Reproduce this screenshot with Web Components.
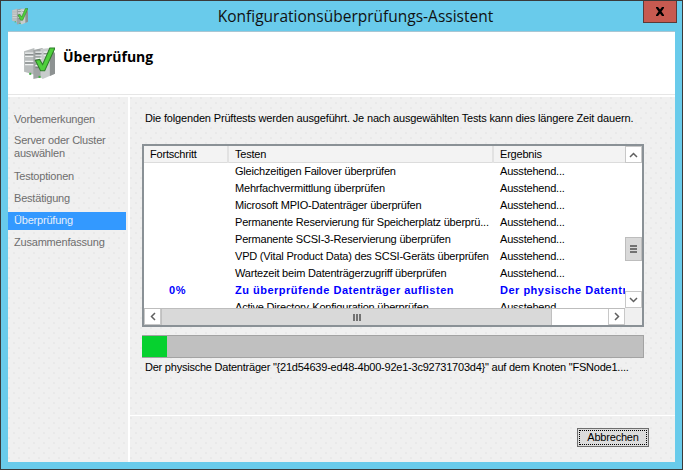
<!DOCTYPE html>
<html lang="de">
<head>
<meta charset="utf-8">
<title>Konfigurationsüberprüfungs-Assistent</title>
<style>
  html, body { margin: 0; padding: 0; background: #69cbeb; }
  body { font: 11px/13px "Liberation Sans", Arial, sans-serif; color: #000; letter-spacing: -.2px; }
</style>
</head>
<body>

<template id="server-icon">
  <style>:host { display: block; } svg { display: block; width: 100%; height: 100%; }</style>
  <svg viewBox="0 0 32 32">
    <path d="M2 4 L12 1 L12 27 L2 24 Z" fill="#b9bdbd"/>
    <path d="M11 3 L20 1 L20 29 L11 31 Z" fill="#9fa4a4"/>
    <path d="M18 2 L27 1 L32 6 L32 26 L20 31 L18 29 Z" fill="#c8cccc"/>
    <path d="M27 1 L32 6 L32 26 L27 28 Z" fill="#8d9292"/>
    <path d="M3 6 H11 M3 9 H11 M3 14 H11 M3 17 H11 M13 5 H19 M13 8 H19 M13 11 H19 M13 18 H19 M21 5 H26 M21 8 H26" stroke="#f0f2f2" stroke-width="1.2"/>
    <path d="M3 7.5 H11 M3 15.5 H11 M13 6.5 H19 M13 20 H19 M21 6.5 H26" stroke="#6f7474" stroke-width=".8"/>
    <rect x="7" y="25" width="2" height="2" fill="#40b040"/>
    <rect x="16" y="28" width="2" height="2" fill="#40b040"/>
    <path d="M13 13 L17 12 L20 17 L27 1 L32 1 L22 23 L18 23 Z" fill="#4fd03c" stroke="#2f7d2a" stroke-width="1"/>
  </svg>
</template>

<template id="title-bar">
  <style>
    :host { display: flex; align-items: flex-start; height: 30px; position: relative; }
    .icon { width: 17px; height: 17px; margin: 7px 0 0 10px; flex: none; }
    .title { flex: 1; text-align: center; margin: 5px 0 0 42px; padding-right: 2px;
      font: 15.5px/20px "Open Sans", "Noto Sans", sans-serif; letter-spacing: 0; color: #111; }
    .close { flex: none; box-sizing: border-box; width: 34px; height: 22px; margin-right: 5px;
      background: #c75a50; border: 1px solid #5b3a38; border-top: none;
      display: flex; align-items: center; justify-content: center; }
  </style>
  <server-icon class="icon"></server-icon>
  <div class="title"><slot></slot></div>
  <div class="close">
    <svg width="10" height="9" viewBox="0 0 10 9"><path d="M1 0 H3 L5 2.5 L7 0 H9 V1 L6.5 4.5 L9 8 V9 H7 L5 6.5 L3 9 H1 V8 L3.5 4.5 L1 1 Z" fill="#000"/></svg>
  </div>
</template>

<template id="wizard-header">
  <style>
    :host { display: flex; align-items: center; height: 63px; background: #fff;
      border-top: 1px solid #a9c6d3; box-sizing: border-box; }
    .icon { width: 33px; height: 33px; margin: 0 8px 0 14px; }
    h1 { margin: -13px 0 0; font: bold 14px/18px "Open Sans", "Noto Sans", sans-serif; letter-spacing: 0; }
  </style>
  <server-icon class="icon"></server-icon>
  <h1><slot></slot></h1>
</template>

<template id="nav-list">
  <style>
    :host { display: flex; flex-direction: column; box-sizing: border-box; width: 120px; padding: 14px 2px 0 0; flex: none; }
  </style>
  <slot></slot>
</template>

<template id="nav-item">
  <style>
    :host { display: block; padding: 2px 0 3px 6px; margin-bottom: var(--gap, 4px); color: #6e6e6e;
      font-size: 11px; line-height: 13px; }
    :host([selected]) { background: #3399ff; color: #e6effa; }
  </style>
  <slot></slot>
</template>

<template id="result-list">
  <style>
    :host { display: grid; grid-template-columns: 1fr 17px; grid-template-rows: 17px 1fr 17px;
      box-sizing: border-box; width: 502px; height: 183px; border: 2px solid #8a9196; background: #fff; overflow: hidden; }
    .head { display: grid; grid-template-columns: 85px 265px 1fr; background: #f3f3f3; border-bottom: 1px solid #dcdcdc; }
    .head div { padding: 2px 6px; border-right: 2px solid #e2e2e2; white-space: nowrap; }
    .head div:last-child { border-right: none; }
    .up, .down { background: #fff; border: 1px solid #c8c8c8; box-sizing: border-box;
      display: flex; align-items: center; justify-content: center; }
    .vbar { grid-column: 2; grid-row: 2; display: flex; flex-direction: column; background: #fff; padding-top: 74px; }
    .vthumb { height: 24px; background: #d9d9d9; border: 1px solid #bdbdbd; box-sizing: border-box;
      display: flex; align-items: center; justify-content: center; }
    .rows { grid-column: 1; grid-row: 2; overflow: hidden; min-height: 0; }
    .hbar { grid-column: 1; grid-row: 3; display: flex; border-top: 1px solid #bdbdbd; box-sizing: border-box; }
    .hthumb { width: 391px; background: #d9d9d9; border-left: 1px solid #c0c0c0; border-right: 1px solid #c0c0c0; box-sizing: border-box;
      display: flex; align-items: center; justify-content: center; }
    .left, .right { width: 17px; flex: none; box-sizing: border-box; background: #fff; border: 1px solid #c8c8c8; border-top: none; display: flex; align-items: center; justify-content: center; }
    .fill { flex: 1; background: #fff; }
    .corner { grid-column: 2; grid-row: 3; background: #f0f0f0; }
    svg { display: block; }
  </style>
  <div class="head"><div>Fortschritt</div><div>Testen</div><div>Ergebnis</div></div>
  <div class="up"><svg width="9" height="6" viewBox="0 0 9 6"><path d="M1 5 L4.5 1.5 L8 5" fill="none" stroke="#606060" stroke-width="1.5"/></svg></div>
  <div class="rows"><slot></slot></div>
  <div class="vbar">
    <div class="vthumb"><svg width="9" height="8" viewBox="0 0 9 8"><path d="M1 1 H8 M1 4 H8 M1 7 H8" stroke="#505050" stroke-width="1.5"/></svg></div>
    <div class="fill"></div>
    <div class="down" style="height:17px"><svg width="9" height="6" viewBox="0 0 9 6"><path d="M1 1 L4.5 4.5 L8 1" fill="none" stroke="#606060" stroke-width="1.5"/></svg></div>
  </div>
  <div class="hbar">
    <div class="left"><svg width="6" height="9" viewBox="0 0 6 9"><path d="M5 1 L1.5 4.5 L5 8" fill="none" stroke="#606060" stroke-width="1.5"/></svg></div>
    <div class="hthumb"><svg width="8" height="9" viewBox="0 0 8 9"><path d="M1 1 V8 M4 1 V8 M7 1 V8" stroke="#505050" stroke-width="1.5"/></svg></div>
    <div class="fill"></div>
    <div class="right"><svg width="6" height="9" viewBox="0 0 6 9"><path d="M1 1 L4.5 4.5 L1 8" fill="none" stroke="#606060" stroke-width="1.5"/></svg></div>
  </div>
  <div class="corner"></div>
</template>

<template id="result-row">
  <style>
    :host { display: grid; grid-template-columns: 85px 265px 1fr; height: 17px; line-height: 17px; white-space: nowrap; }
    :host([active]) { color: #0000ff; font-weight: bold; letter-spacing: .5px; }
    .p { text-align: center; padding-right: 18px; }
    .t { padding-left: 6px; overflow: hidden; }
    .r { padding-left: 6px; overflow: hidden; }
  </style>
  <div class="p"><slot name="progress"></slot></div>
  <div class="t"><slot></slot></div>
  <div class="r"><slot name="result"></slot></div>
</template>

<template id="progress-meter">
  <style>
    :host { display: block; box-sizing: border-box; width: 502px; height: 23px; background: #c0c0c0; border: 1px solid #a3a3a3; border-left: none; }
    .bar { height: 100%; background: #06d12f; width: calc(var(--value) * 1%); }
  </style>
  <div class="bar"></div>
</template>

<template id="wizard-button">
  <style>
    :host { display: inline-block; box-sizing: border-box; width: 72px; height: 19px; border: 1px solid #6e6e6e; background: #dcdcdc; padding: 1px; }
    div { box-sizing: border-box; height: 100%; border: 1px dotted #000; text-align: center; line-height: 13px; }
  </style>
  <div><slot></slot></div>
</template>

<template id="wizard-page">
  <style>
    :host { display: block; box-sizing: border-box; width: 683px; height: 470px; background: #69cbeb;
      border: 1px solid #3a3a3a; padding: 0 7px 7px 7px; }
    .wrap { margin: 0 -7px; }
    .body { display: flex; box-sizing: border-box; height: 368px; background: #fff; padding-top: 2px; border-top: 1px solid #e6e6e6; }
    .pane { background-color: #f0f0f0;
      background-image: radial-gradient(circle at 1px 1px, #e9e9e9 .7px, transparent .8px), radial-gradient(circle at 1px 1px, #e9e9e9 .7px, transparent .8px);
      background-size: 10px 10px; background-position: 0 0, 5px 5px; }
    .side { flex: none; width: 120px; }
    .main { flex: 1; margin-left: 2px; display: flex; flex-direction: column; }
    .content { flex: 1; padding: 15px 0 0 12px; }
    .intro { margin: 0 0 19px 3px; height: 13px; white-space: nowrap; letter-spacing: -.16px; }
    .status { margin: 3px 0 0 3px; white-space: nowrap; letter-spacing: -.23px; }
    .meter { margin-top: 8px; }
    .foot { height: 47px; box-sizing: border-box; border-top: 1px solid #fff; display: flex; justify-content: flex-end; padding: 12px 26px 0 0; }
  </style>
  <div class="wrap"><title-bar>Konfigurationsüberprüfungs-Assistent</title-bar></div>
  <wizard-header>Überprüfung</wizard-header>
  <div class="body">
    <nav-list class="side pane">
      <nav-item style="--gap:3px">Vorbemerkungen</nav-item>
      <nav-item style="--gap:5px">Server oder Cluster auswählen</nav-item>
      <nav-item>Testoptionen</nav-item>
      <nav-item>Bestätigung</nav-item>
      <nav-item selected>Überprüfung</nav-item>
      <nav-item>Zusammenfassung</nav-item>
    </nav-list>
    <div class="main pane">
      <div class="content">
        <div class="intro">Die folgenden Prüftests werden ausgeführt. Je nach ausgewählten Tests kann dies längere Zeit dauern.</div>
        <result-list><slot></slot></result-list>
        <progress-meter class="meter" style="--value:5"></progress-meter>
        <div class="status">Der physische Datenträger "{21d54639-ed48-4b00-92e1-3c92731703d4}" auf dem Knoten "FSNode1....</div>
      </div>
      <div class="foot"><wizard-button>Abbrechen</wizard-button></div>
    </div>
  </div>
</template>

<wizard-page>
  <result-row>Gleichzeitigen Failover überprüfen<span slot="result">Ausstehend...</span></result-row>
  <result-row>Mehrfachvermittlung überprüfen<span slot="result">Ausstehend...</span></result-row>
  <result-row>Microsoft MPIO-Datenträger überprüfen<span slot="result">Ausstehend...</span></result-row>
  <result-row>Permanente Reservierung für Speicherplatz überprü...<span slot="result">Ausstehend...</span></result-row>
  <result-row>Permanente SCSI-3-Reservierung überprüfen<span slot="result">Ausstehend...</span></result-row>
  <result-row>VPD (Vital Product Data) des SCSI-Geräts überprüfen<span slot="result">Ausstehend...</span></result-row>
  <result-row>Wartezeit beim Datenträgerzugriff überprüfen<span slot="result">Ausstehend...</span></result-row>
  <result-row active><span slot="progress">0%</span>Zu überprüfende Datenträger auflisten<span slot="result">Der physische Datenträger "{21d54639-ed48</span></result-row>
  <result-row>Active Directory-Konfiguration überprüfen<span slot="result">Ausstehend...</span></result-row>
</wizard-page>

<script>
  // all elements are the same: shadow root cloned from the template of the same id
  for (const name of ["server-icon", "title-bar", "wizard-header", "nav-list", "nav-item",
    "result-list", "result-row", "progress-meter", "wizard-button", "wizard-page"]) {
    const tpl = document.getElementById(name);
    customElements.define(name, class extends HTMLElement {
      constructor() {
        super();
        this.attachShadow({ mode: "open" }).appendChild(tpl.content.cloneNode(true));
      }
    });
  }
</script>
</body>
</html>
